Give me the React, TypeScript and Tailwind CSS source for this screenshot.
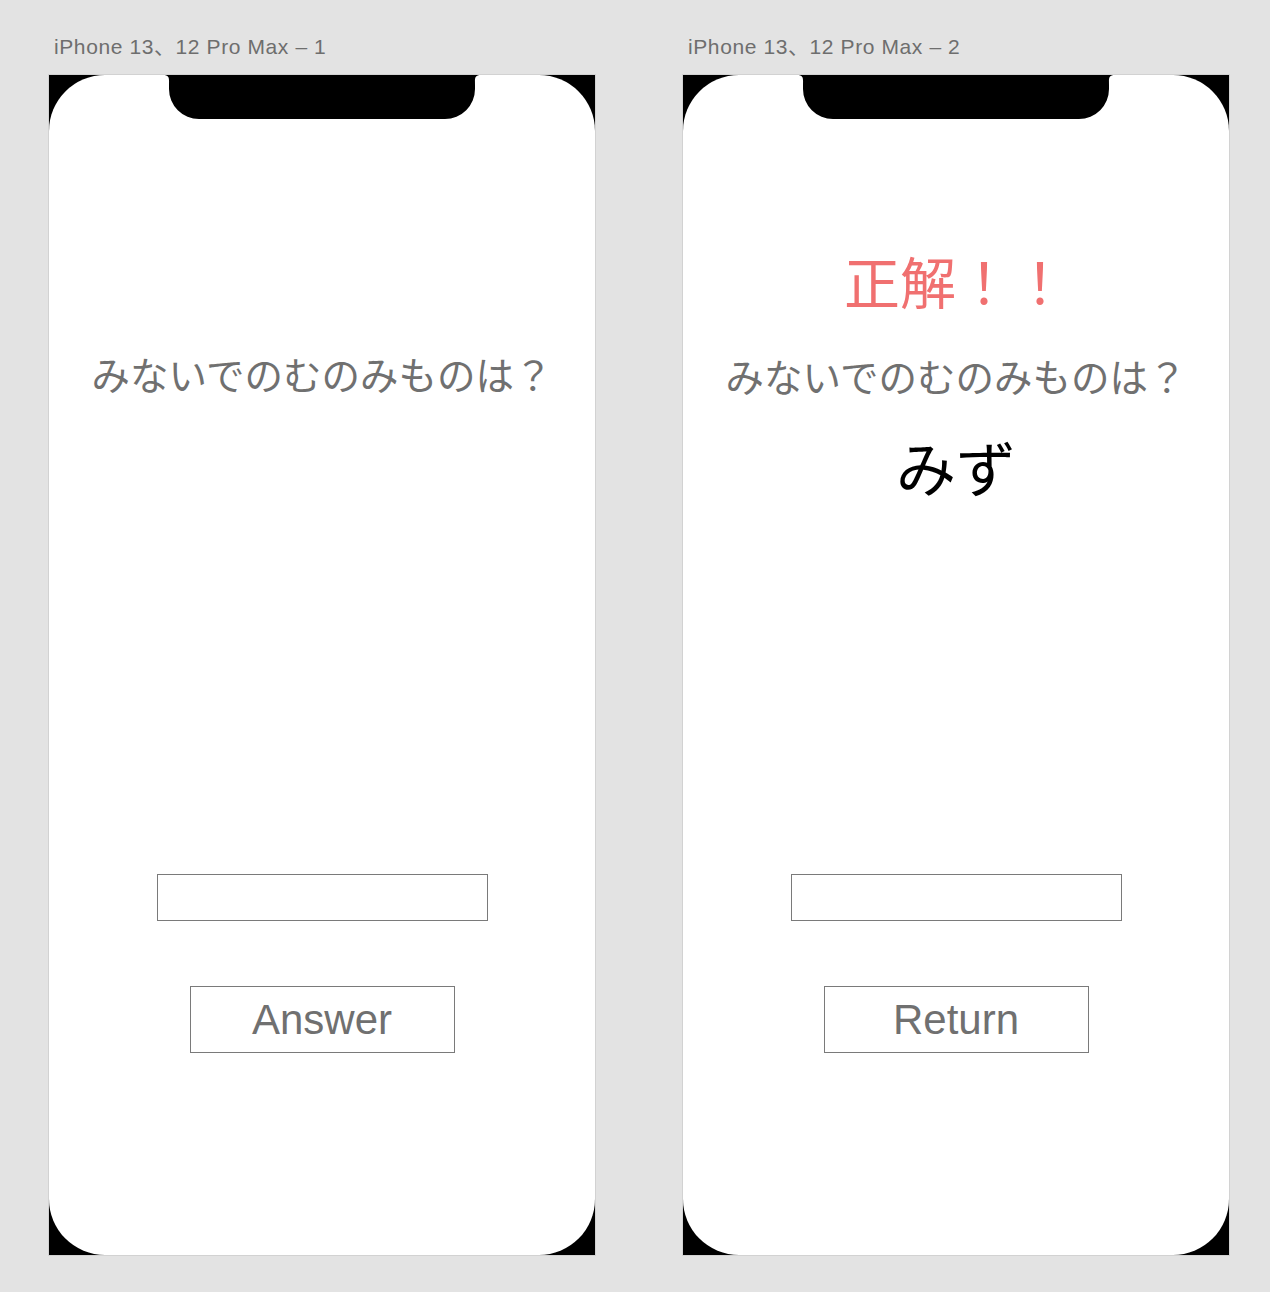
const jp = "font-['Liberation_Sans','Noto_Sans_CJK_JP',sans-serif]";

function Notch() {
  return (
    <svg
      className="absolute left-1/2 top-0 -translate-x-1/2"
      width="318"
      height="44"
      viewBox="0 0 318 44"
    >
      <path
        d="M0 0 H318 C311 0 312 4 312 10 V14 A30 30 0 0 1 282 44 H36 A30 30 0 0 1 6 14 V10 C6 4 7 0 0 0 Z"
        fill="#000"
      />
    </svg>
  );
}

function Phone({ title, children }: { title: string; children: React.ReactNode }) {
  return (
    <div className="flex flex-col">
      <div className={`${jp} h-[24px] pl-[6px] text-[21px] leading-[24px] tracking-[0.6px] text-[#6e6e6e]`}>{title}</div>
      <div className="mt-[15px] h-[1182px] w-[548px] border border-[#d2d2d2] bg-black">
        <div className="relative flex h-full w-full flex-col items-center rounded-[56px] bg-white">
          <Notch />
          {children}
        </div>
      </div>
    </div>
  );
}

function Question() {
  return (
    <div className={`${jp} h-[44px] text-[38.5px] leading-[44px] text-[#707070]`}>みないでのむのみものは？</div>
  );
}

function Controls({ label }: { label: string }) {
  return (
    <div className="flex flex-col items-center">
      <div className="h-[47px] w-[331px] border border-[#7a7a7a] bg-white" />
      <button className={`${jp} mt-[65px] flex h-[67px] w-[265px] items-center justify-center border border-[#7a7a7a] bg-white text-[42px] text-[#707070]`}>
        {label}
      </button>
    </div>
  );
}

export default function App() {
  return (
    <div className="flex h-[1292px] w-[1270px] gap-[86px] bg-[#e3e3e3] px-[48px] pt-[35px]">
      <Phone title="iPhone 13、12 Pro Max – 1">
        <div className="mt-[280px]">
          <Question />
        </div>
        <div className="mt-[475px]">
          <Controls label="Answer" />
        </div>
      </Phone>
      <Phone title="iPhone 13、12 Pro Max – 2">
        <div className={`${jp} mt-[178px] h-[64px] text-[56px] leading-[64px] text-[#f07070]`}>正解！！</div>
        <div className="mt-[40px]">
          <Question />
        </div>
        <div className={`${jp} mt-[36px] h-[70px] text-[60px] leading-[70px] text-black`}>みず</div>
        <div className="mt-[367px]">
          <Controls label="Return" />
        </div>
      </Phone>
    </div>
  );
}
